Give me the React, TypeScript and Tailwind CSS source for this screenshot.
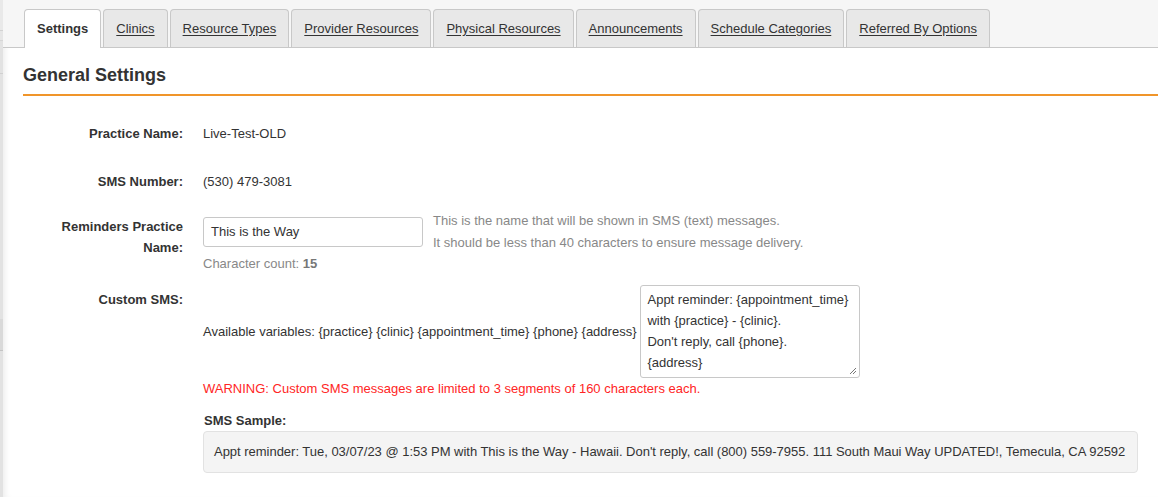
import React from "react";

const tabs = [
  "Settings",
  "Clinics",
  "Resource Types",
  "Provider Resources",
  "Physical Resources",
  "Announcements",
  "Schedule Categories",
  "Referred By Options",
];

function Label({ children, className = "" }: { children: React.ReactNode; className?: string }) {
  return (
    <div className={"w-[160px] shrink-0 text-right font-bold text-[#333] leading-[21px] " + className}>
      {children}
    </div>
  );
}

export default function App() {
  return (
    <div
      className="flex min-h-[497px] w-full bg-white text-[13px] text-[#333]"
      style={{ fontFamily: '"Liberation Sans", Arial, sans-serif' }}
    >
      {/* left edge of neighbouring panel */}
      <div className="flex w-[3px] shrink-0 flex-col bg-[#e2e2e2]">
        <div className="h-[31px] bg-[#e9e9e9] border-b border-[#d2d2d2]" />
        <div className="h-[10px] bg-[#e6e6e6] border-b border-[#d6d6d6]" />
        <div className="h-[33px] border-b border-[#d0d0d0]" />
        <div className="h-[245px]" />
        <div className="h-[32px] bg-[#d9d9d9] border-b border-[#c4c4c4]" />
        <div className="flex-1" />
      </div>

      <div className="flex min-w-0 flex-1 flex-col shadow-[inset_6px_0_6px_-4px_rgba(0,0,0,0.08)]">
        {/* tab bar */}
        <div className="flex h-[48px] items-end gap-[2px] border-b border-[#c8c8c8] bg-[#f6f6f6] pl-[21px]">
          {tabs.map((t, i) =>
            i === 0 ? (
              <div
                key={t}
                className="-mb-px flex h-[39px] items-center rounded-t-[4px] border border-b-0 border-[#c8c8c8] bg-white px-[12px] font-bold text-[#333]"
              >
                {t}
              </div>
            ) : (
              <div
                key={t}
                className="flex h-[38px] items-center rounded-t-[4px] border border-b-0 border-[#c8c8c8] bg-[#e8e8e8] px-[12px] text-[#333] underline underline-offset-[2px]"
              >
                {t}
              </div>
            )
          )}
        </div>

        {/* heading */}
        <div className="ml-[20px] border-b-2 border-[#f0952a] pt-[16px] pb-[8px]">
          <h2 className="text-[18px] font-bold leading-[22px] text-[#333]">General Settings</h2>
        </div>

        {/* form */}
        <div className="flex flex-col pl-[20px] pr-[20px] pt-[27px]">
          <div className="flex gap-[20px]">
            <Label>Practice Name:</Label>
            <div className="leading-[21px]">Live-Test-OLD</div>
          </div>

          <div className="mt-[27px] flex gap-[20px]">
            <Label>SMS Number:</Label>
            <div className="leading-[21px]">(530) 479-3081</div>
          </div>

          <div className="mt-[18px] flex gap-[20px]">
            <Label className="pt-[6px]">Reminders Practice Name:</Label>
            <div className="flex flex-col">
              <div className="flex items-start gap-[10px]">
                <div className="mt-[7px] flex h-[30px] w-[220px] items-center rounded-[3px] border border-[#c8c8c8] bg-white px-[7px]">
                  This is the Way
                </div>
                <div className="leading-[22px] text-[#888]">
                  This is the name that will be shown in SMS (text) messages.
                  <br />
                  It should be less than 40 characters to ensure message delivery.
                </div>
              </div>
              <div className="leading-[20px] text-[#888]">
                Character count: <span className="font-bold text-[#777]">15</span>
              </div>
            </div>
          </div>

          <div className="mt-[11px] flex gap-[20px]">
            <Label className="pt-[4px]">Custom SMS:</Label>
            <div className="flex min-w-0 flex-1 flex-col">
              <div className="flex items-center gap-[4px]">
                <div className="leading-[21px]">
                  Available variables: {"{practice}"} {"{clinic}"} {"{appointment_time}"} {"{phone}"} {"{address}"}
                </div>
                <div className="relative h-[93px] w-[220px] rounded-[3px] border border-[#c8c8c8] bg-white px-[6px] pt-[3px] leading-[21px]">
                  Appt reminder: {"{appointment_time}"}
                  <br />
                  with {"{practice}"} - {"{clinic}"}.
                  <br />
                  Don't reply, call {"{phone}"}.
                  <br />
                  {"{address}"}
                  <svg className="absolute bottom-[2px] right-[2px]" width="8" height="8" viewBox="0 0 8 8">
                    <path d="M7 1 L1 7 M7 4 L4 7" stroke="#777" strokeWidth="1" />
                  </svg>
                </div>
              </div>
              <div className="mt-px leading-[20px] text-[#ff2525]">
                WARNING: Custom SMS messages are limited to 3 segments of 160 characters each.
              </div>
              <div className="mt-[12px] pl-px font-bold leading-[20px]">SMS Sample:</div>
              <div className="flex h-[42px] items-center whitespace-nowrap rounded-[4px] border border-[#e2e2e2] bg-[#f4f4f4] px-[10px] tracking-[-0.02px]">
                Appt reminder: Tue, 03/07/23 @ 1:53 PM with This is the Way - Hawaii. Don't reply, call (800) 559-7955. 111 South Maui Way UPDATED!, Temecula, CA 92592
              </div>
            </div>
          </div>
        </div>
      </div>
    </div>
  );
}
